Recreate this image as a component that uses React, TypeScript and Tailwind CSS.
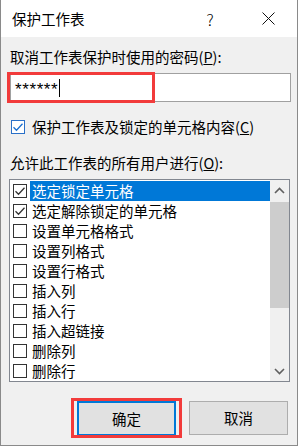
import React from "react";

const font = { fontFamily: '"Noto Sans CJK SC", "Noto Sans", sans-serif' };

const items = [
  { label: "选定锁定单元格", checked: true },
  { label: "选定解除锁定的单元格", checked: true },
  { label: "设置单元格格式", checked: false },
  { label: "设置列格式", checked: false },
  { label: "设置行格式", checked: false },
  { label: "插入列", checked: false },
  { label: "插入行", checked: false },
  { label: "插入超链接", checked: false },
  { label: "删除列", checked: false },
  { label: "删除行", checked: false },
];

const Check = ({ color }: { color: string }) => (
  <svg width="12" height="12" viewBox="0 0 12 12">
    <path d="M1.5 6.2 L4.5 9.2 L10.5 2.8" fill="none" stroke={color} strokeWidth="1.3" />
  </svg>
);

const App = () => {
  return (
    <div className="w-[299px] h-[447px] bg-white text-black overflow-hidden" style={font}>
      <div className="relative w-[298px] h-[446px] border border-t-0 border-[#8a8a8a] flex flex-col">
        {/* Title bar */}
        <div className="h-[37px] bg-white flex items-center pl-[11px] shrink-0">
          <span className="text-[14.5px] leading-[20px]">保护工作表</span>
          <span className="ml-[122px] text-[16px] leading-[20px] font-light">?</span>
          <svg className="ml-[48px]" width="13" height="13" viewBox="0 0 13 13">
            <path d="M0.5 0.5 L12.5 12.5 M12.5 0.5 L0.5 12.5" stroke="#111" strokeWidth="1" />
          </svg>
        </div>

        {/* Body */}
        <div className="flex-1 bg-[#f0f0f0] pl-[8px] pr-[8px] pt-[10px] text-[14.5px]">
          <div className="leading-[20px] pl-[1px]">
            取消工作表保护时使用的密码(<span className="underline">P</span>):
          </div>

          {/* Password input */}
          <div className="relative mt-[6px] ml-[1px] w-[281px] h-[29px] bg-white border border-[#a0a0a0] flex items-center pl-[4px]">
            <span className="text-[17px] leading-[16px] pt-[5px] tracking-[0.6px]" style={{ fontFamily: '"Liberation Sans", sans-serif' }}>
              ******
            </span>
            <span className="w-[1px] h-[18px] bg-black ml-[1px]" />
            <div className="absolute left-[-4px] top-[-2px] w-[148px] h-[31px] border-[3px] border-[#f23b3b]" />
          </div>

          {/* Protect checkbox */}
          <div className="mt-[15px] h-[20px] flex items-center pl-[2px]">
            <div className="w-[14px] h-[14px] bg-white border border-[#2a70c8] flex items-center justify-center">
              <Check color="#1a6fd0" />
            </div>
            <span className="ml-[7px] leading-[20px]">
              保护工作表及锁定的单元格内容(<span className="underline">C</span>)
            </span>
          </div>

          <div className="mt-[16px] leading-[20px] pl-[1px]">
            允许此工作表的所有用户进行(<span className="underline">O</span>):
          </div>

          {/* List box */}
          <div className="mt-[6px] w-[281px] h-[203px] bg-white border border-[#828790] flex">
            <div className="flex-1 pt-[1px]">
              {items.map((it, i) => (
                <div key={i} className="h-[20px] flex items-center pl-[3px]">
                  <div className="w-[14px] h-[14px] bg-white border border-[#333] flex items-center justify-center shrink-0">
                    {it.checked && <Check color="#333" />}
                  </div>
                  <div
                    className={
                      i === 0
                        ? "ml-[3px] h-[20px] flex-1 bg-[#0078d7] text-white leading-[20px] pl-[2px]"
                        : "ml-[3px] h-[20px] flex-1 leading-[20px] pl-[2px]"
                    }
                  >
                    {it.label}
                  </div>
                </div>
              ))}
            </div>
            {/* Scrollbar */}
            <div className="w-[19px] bg-[#f0f0f0] flex flex-col items-center">
              <div className="h-[20px] flex items-center justify-center">
                <svg width="11" height="7" viewBox="0 0 11 7">
                  <path d="M1 6 L5.5 1.5 L10 6" fill="none" stroke="#606060" strokeWidth="1.6" />
                </svg>
              </div>
              <div className="w-[19px] h-[106px] mt-[2px] bg-[#cdcdcd]" />
              <div className="flex-1" />
              <div className="h-[20px] flex items-center justify-center">
                <svg width="11" height="7" viewBox="0 0 11 7">
                  <path d="M1 1 L5.5 5.5 L10 1" fill="none" stroke="#606060" strokeWidth="1.6" />
                </svg>
              </div>
            </div>
          </div>

          {/* Buttons */}
          <div className="mt-[19px] flex justify-end gap-[13px] pr-[1px]">
            <div className="relative">
              <div className="w-[99px] h-[35px] bg-[#e1e1e1] border-2 border-[#0078d7] flex items-center justify-center">
                <span className="leading-[20px]">确定</span>
              </div>
              <div className="absolute left-[-6px] top-[-3px] w-[111px] h-[40px] border-[3px] border-[#f23b3b]" />
            </div>
            <div className="w-[99px] h-[34px] bg-[#e1e1e1] border border-[#adadad] flex items-center justify-center">
              <span className="leading-[20px]">取消</span>
            </div>
          </div>
        </div>
      </div>
    </div>
  );
};

export default App;
